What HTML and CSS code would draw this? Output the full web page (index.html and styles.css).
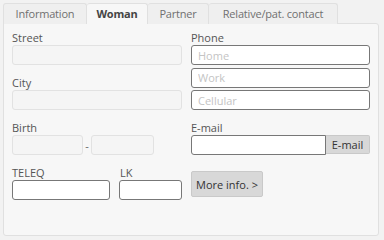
FILE: index.html
```html
<!DOCTYPE html>
<html>
<head>
  <meta charset="UTF-8">
  <title>Patient contacts</title>
  <link rel="stylesheet" href="styles.css">
</head>
<body>
  <div class="tabs">
    <div class="tab tab-info">Information</div>
    <div class="tab tab-woman active">Woman</div>
    <div class="tab tab-partner">Partner</div>
    <div class="tab tab-relative">Relative/pat. contact</div>
  </div>
  <div class="panel">
    <div class="col left-col">
      <div class="field">
        <label>Street</label>
        <input class="input disabled" disabled>
      </div>
      <div class="field">
        <label>City</label>
        <input class="input disabled" disabled>
      </div>
      <div class="field">
        <label>Birth</label>
        <div class="birth-row">
          <input class="input disabled birth-a" disabled>
          <span class="dash">-</span>
          <input class="input disabled birth-b" disabled>
        </div>
      </div>
      <div class="field-row">
        <div class="field teleq">
          <label>TELEQ</label>
          <input class="input">
        </div>
        <div class="field lk">
          <label>LK</label>
          <input class="input">
        </div>
      </div>
    </div>
    <div class="col right-col">
      <div class="field">
        <label>Phone</label>
        <div class="phone-list">
          <input class="input" placeholder="Home">
          <input class="input" placeholder="Work">
          <input class="input" placeholder="Cellular">
        </div>
      </div>
      <div class="field">
        <label>E-mail</label>
        <div class="email-row">
          <input class="input email-input">
          <button class="btn email-btn">E-mail</button>
        </div>
      </div>
      <div class="more">
        <button class="btn more-btn">More info. &gt;</button>
      </div>
    </div>
  </div>
</body>
</html>
```

FILE: styles.css
```css
body {
  margin: 0;
  padding: 3px 5px 4px 3px;
  background-color: #f2f2f2;
  font-family: 'Open Sans', 'Noto Sans', Arial, sans-serif;
  font-size: 11px;
  color: #555;
}

.tabs {
  display: flex;
  height: 20px;
}

.tab {
  box-sizing: border-box;
  height: 21px;
  padding-top: 2px;
  border: 1px solid #e0e0e0;
  border-bottom: none;
  border-left: none;
  border-radius: 3px 3px 0 0;
  background-color: #efefef;
  color: #707070;
  line-height: 16px;
  text-align: center;
  letter-spacing: -0.2px;
  white-space: nowrap;
}

.tab:first-child {
  border-left: 1px solid #e0e0e0;
}

.tab-info {
  width: 84px;
}

.tab-woman {
  width: 61px;
}

.tab-partner {
  width: 61px;
}

.tab-relative {
  width: 129px;
}

.tab.active {
  background-color: #f7f7f7;
  color: #444;
  font-weight: bold;
  position: relative;
  z-index: 1;
}

.panel {
  box-sizing: border-box;
  height: 213px;
  display: flex;
  gap: 9px;
  padding: 7px 8px 0;
  background-color: #f7f7f7;
  border: 1px solid #e0e0e0;
  border-radius: 0 3px 3px 3px;
}

.col {
  display: flex;
  flex-direction: column;
}

.left-col {
  width: 170px;
  gap: 11px;
}

.right-col {
  width: 179px;
  gap: 11px;
}

.field label {
  display: block;
  height: 14px;
  line-height: 14px;
  color: #555;
}

.input {
  box-sizing: border-box;
  display: block;
  width: 100%;
  height: 20px;
  margin: 0;
  padding: 0 6px;
  border: 1px solid #777;
  border-radius: 3px;
  background-color: #fff;
  font-family: inherit;
  font-size: 11px;
  color: #333;
  outline: none;
}

.input::placeholder {
  color: #c4c4c4;
}

.input.disabled {
  border-color: #e2e2e2;
  background-color: #f5f5f5;
}

.birth-row {
  display: flex;
  align-items: center;
}

.birth-a {
  width: 71px;
}

.birth-b {
  width: 63px;
}

.dash {
  width: 8px;
  text-align: center;
  color: #666;
}

.field-row {
  display: flex;
  gap: 9px;
}

.teleq {
  width: 98px;
}

.lk {
  width: 63px;
}

.lk label {
  padding-left: 1px;
}

.phone-list {
  display: flex;
  flex-direction: column;
  gap: 2.5px;
}

.email-row {
  display: flex;
}

.email-input {
  flex: 1;
  border-radius: 3px 0 0 3px;
}

.btn {
  box-sizing: border-box;
  margin: 0;
  border: 1px solid #c9c9c9;
  border-radius: 2px;
  background-color: #d8d8d8;
  font-family: inherit;
  font-size: 11px;
  color: #333;
  cursor: pointer;
}

.email-btn {
  width: 44px;
  height: 19px;
  padding: 0;
  border-left: none;
  border-radius: 0 2px 2px 0;
}

.more {
  padding-top: 5px;
}

.more-btn {
  width: 72px;
  height: 26px;
  padding: 0;
}
```
